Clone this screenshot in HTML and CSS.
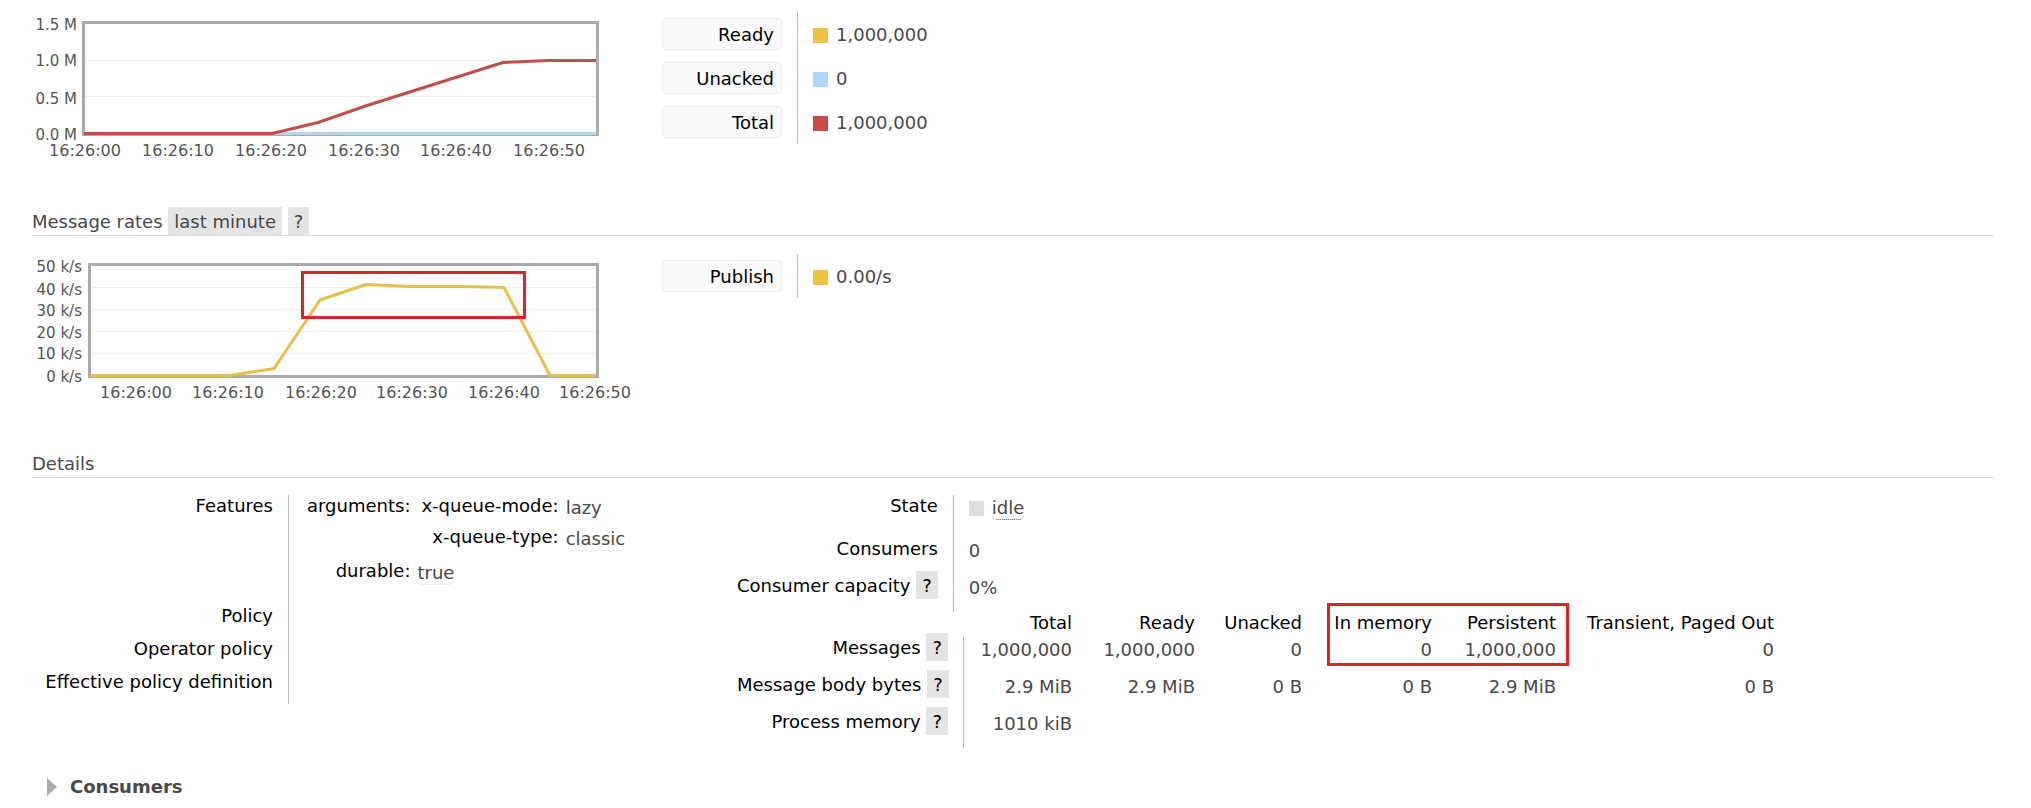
FILE: index.html
```html
<!DOCTYPE html>
<html lang="en">
<head>
<meta charset="utf-8">
<title>Queue details</title>
<link rel="stylesheet" href="styles.css">
</head>
<body>
<main class="page">
  <section class="overview overview-first">
    <svg class="chart" viewBox="32 12 620 150" role="img" aria-label="Queued messages">
      <g class="grid"><path d="M84 60.5H597M84 96.5H597"/></g>
      <rect class="frame" x="83.5" y="22.5" width="514" height="112"/>
      <path class="series blue" d="M85 133.5H596"/>
      <path class="series red" d="M84 133.5H272L318 122.5L367 105.5L503 62.5L549 60.5H596"/>
      <g class="axis-y">
        <text x="77" y="30">1.5 M</text><text x="77" y="66">1.0 M</text>
        <text x="77" y="104">0.5 M</text><text x="77" y="140">0.0 M</text>
      </g>
      <g class="axis-x">
        <text x="85" y="156">16:26:00</text><text x="178" y="156">16:26:10</text>
        <text x="271" y="156">16:26:20</text><text x="364" y="156">16:26:30</text>
        <text x="456" y="156">16:26:40</text><text x="549" y="156">16:26:50</text>
      </g>
    </svg>
    <table class="legend">
      <tr><th scope="row"><button type="button">Ready</button></th><td><i class="swatch yellow"></i>1,000,000</td></tr>
      <tr><th scope="row"><button type="button">Unacked</button></th><td><i class="swatch lightblue"></i>0</td></tr>
      <tr><th scope="row"><button type="button">Total</button></th><td><i class="swatch crimson"></i>1,000,000</td></tr>
    </table>
  </section>

  <h2 class="rule">Message rates <button type="button" class="chip">last minute</button> <button type="button" class="chip">?</button></h2>
  <section class="overview">
    <svg class="chart" viewBox="32 254 620 150" role="img" aria-label="Message rates">
      <g class="grid"><path d="M92 287.5H597M92 309.5H597M92 331.5H597M92 353.5H597"/></g>
      <rect class="frame" x="89.5" y="264.5" width="508" height="112"/>
      <path class="series yellow-line" d="M90 375.5H230L274 368.5L320 300L366 284.5L410 286.5H463L504 287.5L550 375.5H596"/>
      <g class="axis-y">
        <text x="82" y="272">50 k/s</text><text x="82" y="295">40 k/s</text>
        <text x="82" y="316">30 k/s</text><text x="82" y="338">20 k/s</text>
        <text x="82" y="359">10 k/s</text><text x="82" y="382">0 k/s</text>
      </g>
      <g class="axis-x">
        <text x="136" y="398">16:26:00</text><text x="228" y="398">16:26:10</text>
        <text x="321" y="398">16:26:20</text><text x="412" y="398">16:26:30</text>
        <text x="504" y="398">16:26:40</text><text x="595" y="398">16:26:50</text>
      </g>
      <rect class="mark" x="302.5" y="272.5" width="222" height="45"/>
    </svg>
    <table class="legend">
      <tr><th scope="row"><button type="button">Publish</button></th><td><i class="swatch yellow"></i>0.00/s</td></tr>
    </table>
  </section>

  <h2 class="rule">Details</h2>
  <section class="details">
    <div class="policies">
      <table class="facts">
        <tr class="features"><th scope="row">Features</th><td>
          <table class="args">
            <tr><th scope="row">arguments:</th><td>
              <table class="args nested">
                <tr><th scope="row">x-queue-mode:</th><td class="value"><abbr>lazy</abbr></td></tr>
                <tr><th scope="row">x-queue-type:</th><td class="value"><abbr>classic</abbr></td></tr>
              </table>
            </td></tr>
            <tr><th scope="row">durable:</th><td class="value"><abbr>true</abbr></td></tr>
          </table>
        </td></tr>
        <tr><th scope="row">Policy</th><td></td></tr>
        <tr><th scope="row">Operator policy</th><td></td></tr>
        <tr><th scope="row">Effective policy definition</th><td></td></tr>
      </table>
    </div>
    <div class="status">
      <table class="state">
        <tr class="tall"><th scope="row">State</th><td><i class="swatch grey"></i><abbr class="dark">idle</abbr></td></tr>
        <tr><th scope="row">Consumers</th><td>0</td></tr>
        <tr><th scope="row">Consumer capacity <button type="button" class="chip">?</button></th><td>0%</td></tr>
      </table>
      <div class="counts-wrap">
        <table class="counts">
          <colgroup><col class="c-label"><col class="c-total"><col class="c-ready"><col class="c-unacked"><col class="c-memory"><col class="c-persistent"><col class="c-transient"></colgroup>
          <thead><tr><td></td><th scope="col">Total</th><th scope="col">Ready</th><th scope="col">Unacked</th><th scope="col">In memory</th><th scope="col">Persistent</th><th scope="col">Transient, Paged Out</th></tr></thead>
          <tbody>
            <tr><th scope="row">Messages <button type="button" class="chip">?</button></th><td>1,000,000</td><td>1,000,000</td><td>0</td><td>0</td><td>1,000,000</td><td>0</td></tr>
            <tr><th scope="row">Message body bytes <button type="button" class="chip">?</button></th><td>2.9 MiB</td><td>2.9 MiB</td><td>0 B</td><td>0 B</td><td>2.9 MiB</td><td>0 B</td></tr>
            <tr><th scope="row">Process memory <button type="button" class="chip">?</button></th><td>1010 kiB</td><td></td><td></td><td></td><td></td><td></td></tr>
          </tbody>
        </table>
        <div class="highlight"></div>
      </div>
    </div>
  </section>

  <h2 class="collapsed"><button type="button" aria-expanded="false"><svg class="arrow" viewBox="0 0 10 18" aria-hidden="true"><path d="M0 0L10 9L0 18Z"/></svg>Consumers</button></h2>
</main>
</body>
</html>
```
FILE: styles.css
```css
* { box-sizing: border-box; }
body {
  margin: 0;
  background: #fff;
  color: #484848;
  font: 18px/22px Verdana, "DejaVu Sans", sans-serif;
}
button {
  font: inherit;
  color: inherit;
  border: 0;
  margin: 0;
  padding: 0;
  background: none;
  cursor: pointer;
}
table { border-collapse: separate; border-spacing: 0; }
th, td { padding: 0; font-weight: normal; vertical-align: top; white-space: nowrap; }
th { color: #000; text-align: right; }
abbr { border-bottom: 1px dotted #ddd; border-radius: 5px; padding-bottom: 1px; }
abbr.dark { border-color: #555; }

.page { padding: 0 37px 0 32px; }

.overview { display: flex; align-items: flex-start; gap: 10px; padding: 18px 0 45px; }
.overview-first { padding-top: 12px; }
.chart { flex: none; width: 620px; height: 150px; }
.frame { fill: none; stroke: #aaa; stroke-width: 3; }
.grid { fill: none; stroke: #eee; stroke-width: 1; }
.series { fill: none; stroke-width: 3; stroke-linejoin: round; }
.blue { stroke: #b5d5f0; }
.red { stroke: #c24f48; }
.yellow-line { stroke: #e6c04a; }
.mark { fill: none; stroke: #dc2329; stroke-width: 3; }
.axis-y, .axis-x { fill: #545454; }
.axis-y { font-size: 15px; text-anchor: end; }
.axis-x { font-size: 16px; text-anchor: middle; }

.legend th { padding: 6px 15px 6px 0; border-right: 1px solid #bbb; }
.legend td { padding: 12px 0 10px 15px; }
.legend button {
  display: block;
  width: 120px;
  height: 32px;
  padding: 2px 7px 0;
  text-align: right;
  background: #fafafa;
  border: 1px solid #eee;
  border-radius: 4px;
}
.swatch { display: inline-block; width: 15px; height: 15px; margin-right: 8px; vertical-align: -2px; }
.yellow { background: #edc240; }
.lightblue { background: #afd8f8; }
.crimson { background: #cb4b4b; }
.grey { background: #ddd; }

.rule {
  margin: 0;
  padding: 4px 0 2px;
  font-size: 18px;
  font-weight: normal;
  border-bottom: 1px solid #ddd;
}
.chip { padding: 4px 6px 2px; margin: -4px 0 -2px; background: #e4e4e4; }

.details { display: flex; align-items: flex-start; padding-top: 17px; }
.policies { flex: none; width: 705px; }
.facts > tbody > tr > th { width: 257px; padding: 0 15px 11px 0; border-right: 1px solid #bbb; }
.facts > tbody > tr > td { padding-left: 18px; }
.features { height: 110px; }
.args th { padding-right: 7px; height: 31px; }
.nested { margin: 0 0 3px 4px; }
.value { padding-top: 2px; }

.state th { width: 215px; height: 37px; padding-right: 15px; border-right: 1px solid #bbb; }
.state .tall th { height: 43px; }
.state td { padding: 2px 0 0 15px; }

.counts-wrap { position: relative; }
.counts { table-layout: fixed; width: 1037px; text-align: right; }
.c-label { width: 227px; }
.c-total { width: 108px; }
.c-ready { width: 123px; }
.c-unacked { width: 107px; }
.c-memory { width: 130px; }
.c-persistent { width: 124px; }
.c-transient { width: 218px; }
.counts thead th { height: 25px; }
.counts tbody th { height: 37px; padding-right: 15px; border-right: 1px solid #bbb; }
.counts tbody td { padding-top: 2px; }
.highlight {
  position: absolute;
  left: 590px;
  top: -9px;
  width: 242px;
  height: 63px;
  border: 3px solid #dc2329;
  pointer-events: none;
}

.collapsed { margin: 28px 0 10px 15px; font-size: 18px; }
.collapsed button { display: flex; align-items: center; gap: 13px; font-weight: bold; }
.arrow { width: 10px; height: 18px; fill: #aaa; }
```
